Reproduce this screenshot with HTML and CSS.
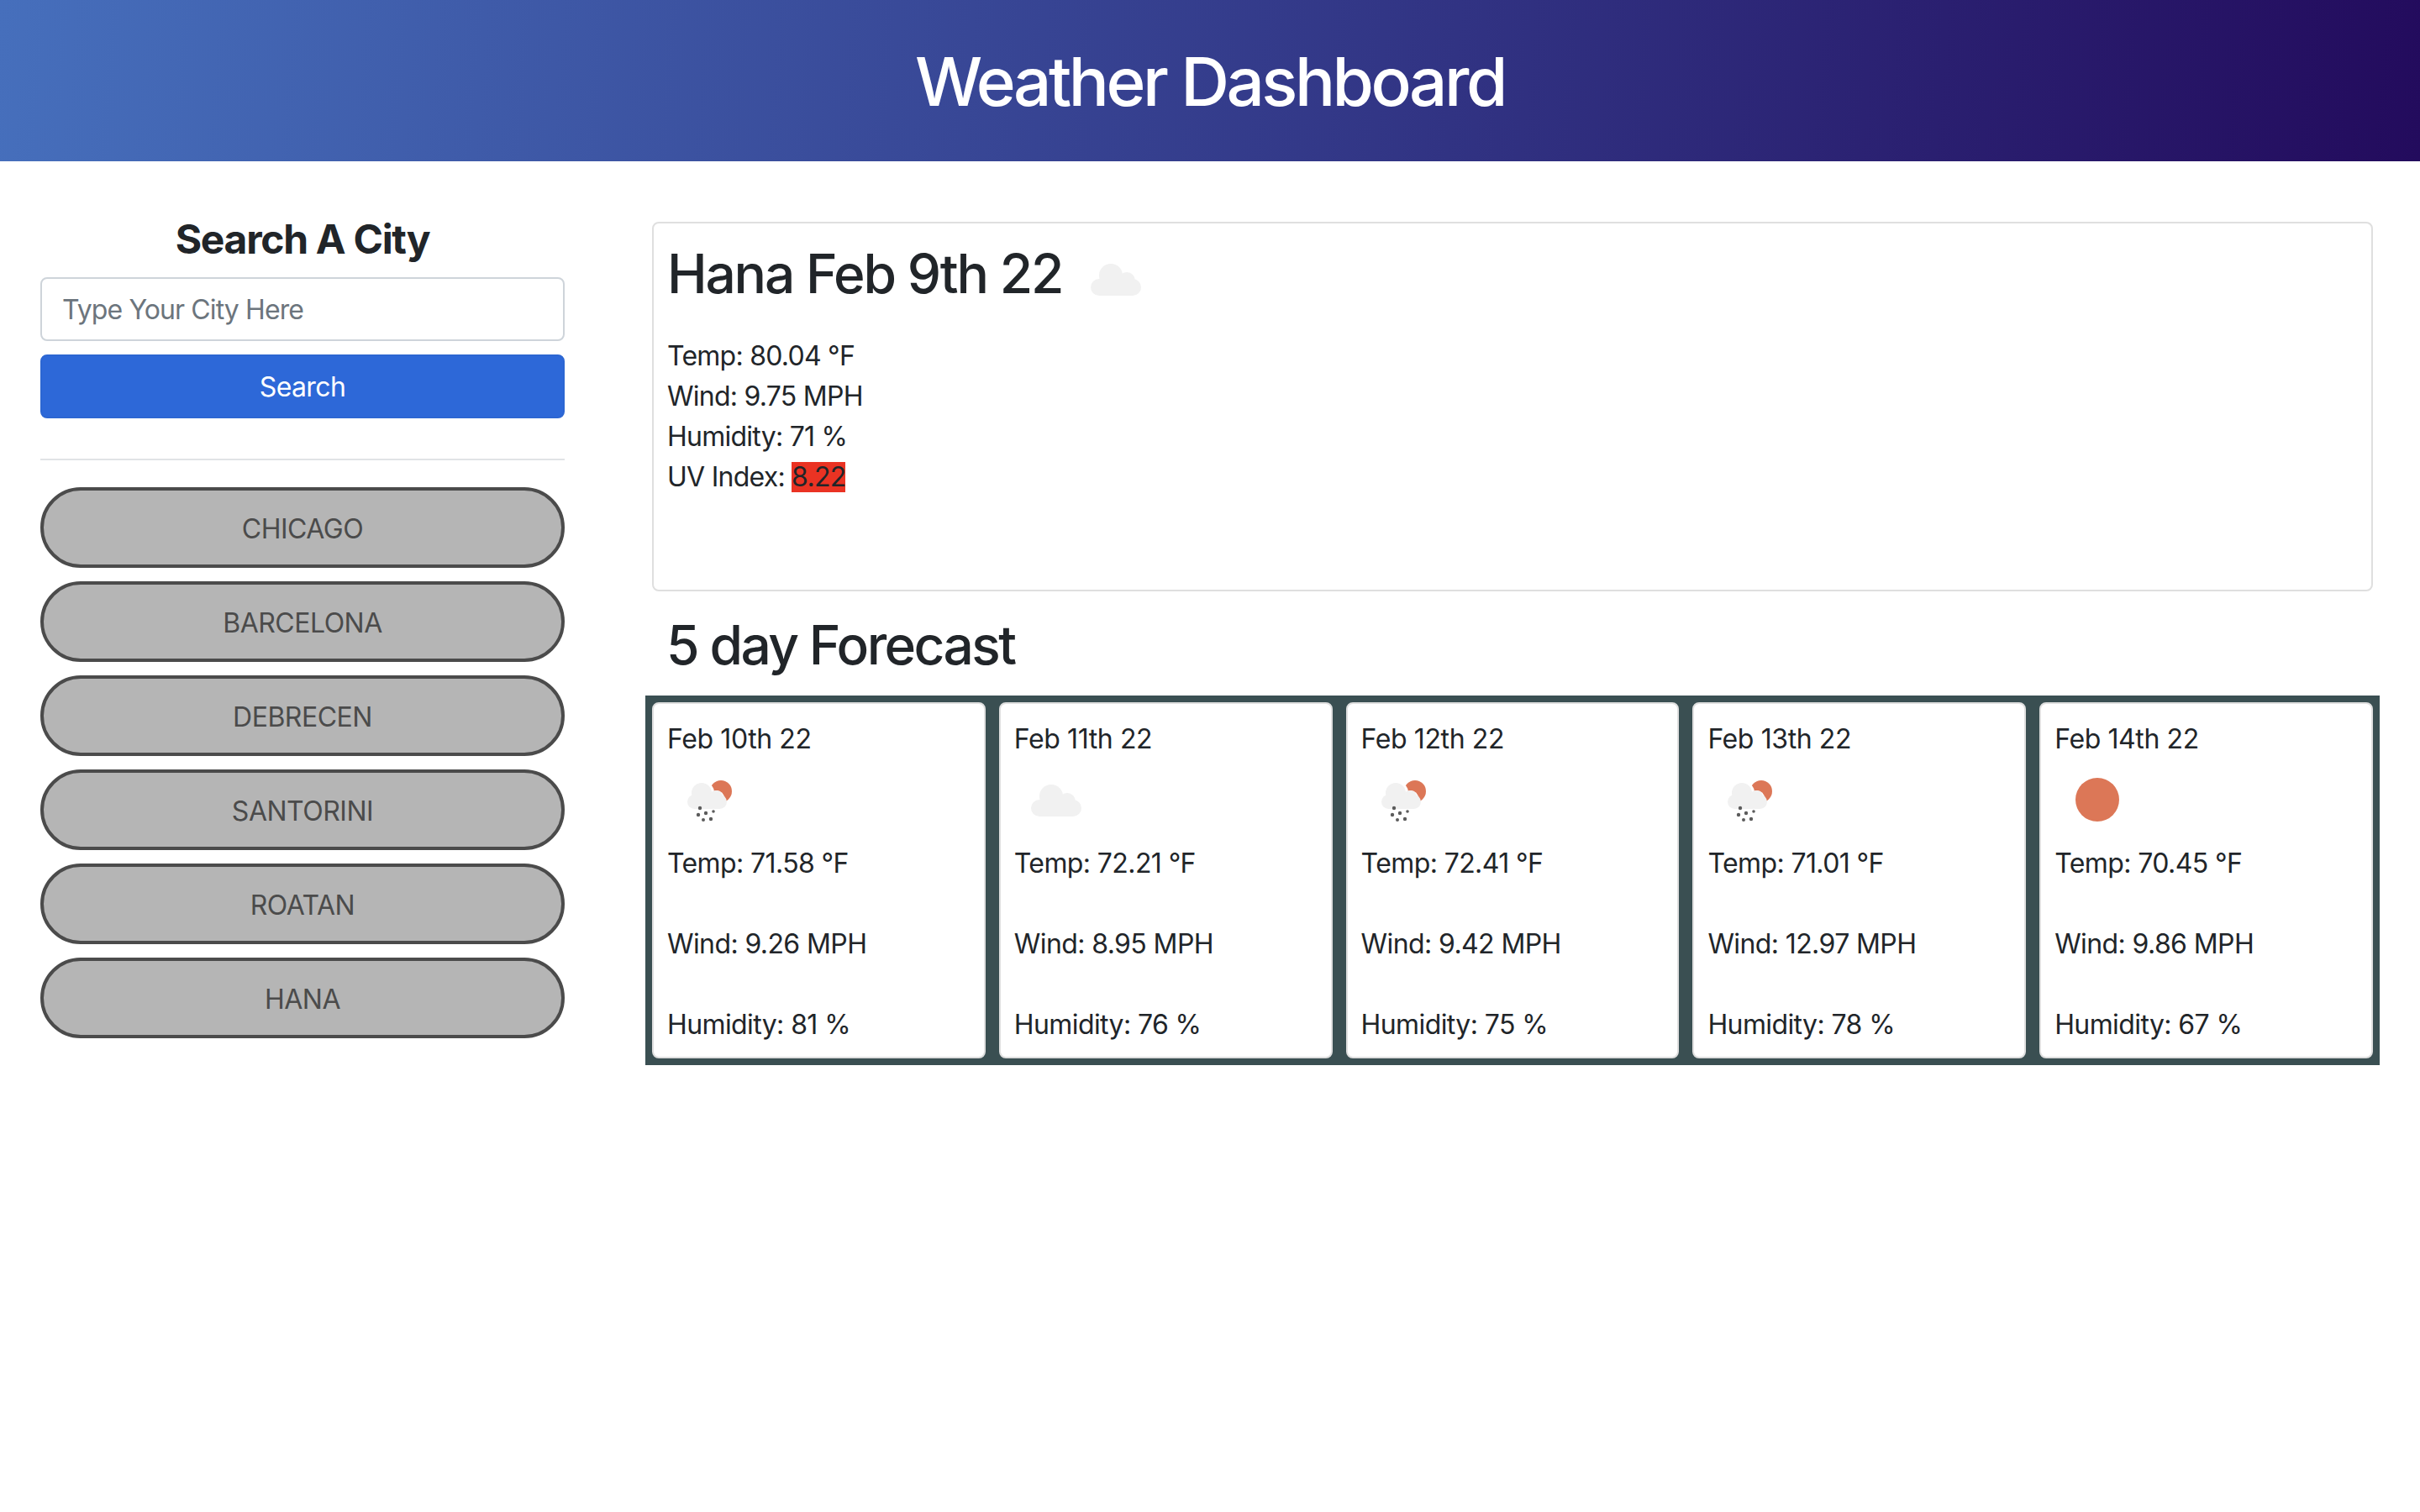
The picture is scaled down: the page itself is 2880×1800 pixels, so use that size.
FILE: index.html
```html
<!DOCTYPE html>
<html lang="en">
<head>
    <meta charset="UTF-8">
    <title>Weather Dashboard</title>
    <link rel="stylesheet" href="styles.css">
</head>
<body>

    <!-- Shared weather icons -->
    <svg class="icon-defs" width="0" height="0">
        <symbol id="icon-cloud" viewBox="0 0 100 100">
            <circle cx="44" cy="46" r="14" />
            <circle cx="63" cy="52" r="10" />
            <rect x="20" y="50" width="60" height="20" rx="10" />
        </symbol>
        <symbol id="icon-rain" viewBox="0 0 100 100">
            <circle cx="64" cy="40" r="13" fill="#dc7757" />
            <g fill="#fff">
                <circle cx="42" cy="42" r="14" />
                <circle cx="59" cy="48" r="9" />
            </g>
            <g fill="#f1f1f1">
                <circle cx="41" cy="42" r="12" />
                <circle cx="58" cy="47" r="8" />
                <rect x="24" y="44" width="47" height="17" rx="8.5" />
            </g>
            <g fill="#5c5c5c">
                <circle cx="39" cy="60" r="2.2" />
                <circle cx="37" cy="68" r="2.2" />
                <circle cx="46" cy="66" r="2.2" />
                <circle cx="55" cy="64" r="1.8" />
                <circle cx="43" cy="74" r="2" />
                <circle cx="52" cy="73" r="2.2" />
            </g>
        </symbol>
    </svg>

    <header class="page-header">
        <h1>Weather Dashboard</h1>
    </header>

    <div class="content">
        <!-- Search column -->
        <aside class="sidebar">
            <h4 class="search-title">Search A City</h4>
            <input class="city-input" type="text" placeholder="Type Your City Here">
            <button class="search-btn">Search</button>
            <hr class="divider">
            <div class="city-list">
                <button class="city-btn">CHICAGO</button>
                <button class="city-btn">BARCELONA</button>
                <button class="city-btn">DEBRECEN</button>
                <button class="city-btn">SANTORINI</button>
                <button class="city-btn">ROATAN</button>
                <button class="city-btn">HANA</button>
            </div>
        </aside>

        <main class="main">
            <!-- Today -->
            <section class="today card">
                <div class="today-head">
                    <h2 class="today-title">Hana Feb 9th 22</h2>
                    <svg class="weather-icon cloud"><use href="#icon-cloud" /></svg>
                </div>
                <div>Temp: 80.04 °F</div>
                <div>Wind: 9.75 MPH</div>
                <div>Humidity: 71 %</div>
                <div>UV Index: <span class="uv-high">8.22</span></div>
            </section>

            <h2 class="forecast-title">5 day Forecast</h2>

            <!-- Forecast -->
            <section class="forecast">
                <div class="day card">
                    <div class="day-date">Feb 10th 22</div>
                    <svg class="weather-icon"><use href="#icon-rain" /></svg>
                    <p>Temp: 71.58 °F</p>
                    <p>Wind: 9.26 MPH</p>
                    <p>Humidity: 81 %</p>
                </div>
                <div class="day card">
                    <div class="day-date">Feb 11th 22</div>
                    <svg class="weather-icon cloud"><use href="#icon-cloud" /></svg>
                    <p>Temp: 72.21 °F</p>
                    <p>Wind: 8.95 MPH</p>
                    <p>Humidity: 76 %</p>
                </div>
                <div class="day card">
                    <div class="day-date">Feb 12th 22</div>
                    <svg class="weather-icon"><use href="#icon-rain" /></svg>
                    <p>Temp: 72.41 °F</p>
                    <p>Wind: 9.42 MPH</p>
                    <p>Humidity: 75 %</p>
                </div>
                <div class="day card">
                    <div class="day-date">Feb 13th 22</div>
                    <svg class="weather-icon"><use href="#icon-rain" /></svg>
                    <p>Temp: 71.01 °F</p>
                    <p>Wind: 12.97 MPH</p>
                    <p>Humidity: 78 %</p>
                </div>
                <div class="day card">
                    <div class="day-date">Feb 14th 22</div>
                    <div class="sun-box"><div class="sun"></div></div>
                    <p>Temp: 70.45 °F</p>
                    <p>Wind: 9.86 MPH</p>
                    <p>Humidity: 67 %</p>
                </div>
            </section>
        </main>
    </div>

</body>
</html>
```

FILE: styles.css
```css
* {
    box-sizing: border-box;
}

body {
    margin: 0;
    background: #fff;
    color: #212529;
    font-family: "Inter", "Liberation Sans", sans-serif;
    font-size: 32px;
    line-height: 48px;
    letter-spacing: -0.6px;
}

.icon-defs {
    position: absolute;
}

/* Header */
.page-header {
    height: 192px;
    display: flex;
    align-items: center;
    justify-content: center;
    background: linear-gradient(95deg, #466fbc, #230b5d);
    color: #fff;
}

.page-header h1 {
    margin: 2px 0 0;
    font-size: 80px;
    font-weight: 500;
    line-height: 96px;
    letter-spacing: -3.5px;
}

/* Two columns */
.content {
    display: flex;
    gap: 104px;
    padding: 48px 56px 0 48px;
}

.sidebar {
    flex: 0 0 624px;
    padding-top: 16px;
    display: flex;
    flex-direction: column;
}

.search-title {
    margin: 0 0 16px;
    font-size: 48px;
    font-weight: 700;
    line-height: 58px;
    text-align: center;
    letter-spacing: -1.3px;
}

.city-input {
    height: 76px;
    padding: 0 24px;
    border: 2px solid #ced4da;
    border-radius: 8px;
    font: inherit;
    letter-spacing: -0.9px;
    color: #212529;
}

.city-input::placeholder {
    color: #6c757d;
    opacity: 1;
}

.search-btn {
    height: 76px;
    margin-top: 16px;
    padding-top: 3px;
    border: 2px solid #2c66d2;
    border-radius: 8px;
    background: #2d68d8;
    color: #fff;
    font: inherit;
    letter-spacing: inherit;
}

.divider {
    width: 100%;
    margin: 48px 0 32px;
    border: 0;
    border-top: 2px solid #e1e3e6;
}

.city-list {
    display: flex;
    flex-direction: column;
    gap: 16px;
}

.city-btn {
    height: 96px;
    padding-top: 4px;
    border: 4px solid #4b4b4b;
    border-radius: 48px;
    background: #b5b5b5;
    color: #4b4b4b;
    font: inherit;
    letter-spacing: -0.5px;
}

/* Main column */
.main {
    flex: 1;
    min-width: 0;
    padding-top: 24px;
}

.card {
    border: 2px solid #dfdfdf;
    border-radius: 8px;
    background: #fff;
    padding: 16px;
}

.today {
    height: 440px;
    letter-spacing: -0.75px;
}

.today-head {
    height: 100px;
    margin-bottom: 18px;
    display: flex;
    align-items: center;
    gap: 14px;
}

.today-title,
.forecast-title {
    font-size: 64px;
    font-weight: 500;
    line-height: 77px;
}

.today-title {
    margin: 0 0 14px;
    letter-spacing: -2.2px;
}

.forecast-title {
    margin: 25px 0 22px 17px;
    letter-spacing: -2.6px;
}

.uv-high {
    display: inline-block;
    height: 36px;
    line-height: 36px;
    background: #ea3323;
}

.forecast {
    display: grid;
    grid-template-columns: repeat(5, 1fr);
    gap: 16px;
    margin: 0 -8px;
    padding: 8px;
    background: #3a4f52;
}

.day {
    padding: 18px 16px 14px;
}

.day-date {
    letter-spacing: -0.4px;
}

.day p {
    margin: 0 0 48px;
}

.day p:last-child {
    margin-bottom: 0;
}

.weather-icon {
    display: block;
    flex: none;
    width: 100px;
    height: 100px;
    filter: blur(0.5px);
}

.day .weather-icon,
.sun-box {
    margin: -2px 0 2px;
}

.cloud {
    fill: #f1f1f1;
}

.sun-box {
    width: 102px;
    height: 100px;
    display: flex;
    align-items: center;
    justify-content: center;
}

.sun {
    width: 52px;
    height: 52px;
    border-radius: 50%;
    background: #dc7757;
    filter: blur(0.5px);
}
```
